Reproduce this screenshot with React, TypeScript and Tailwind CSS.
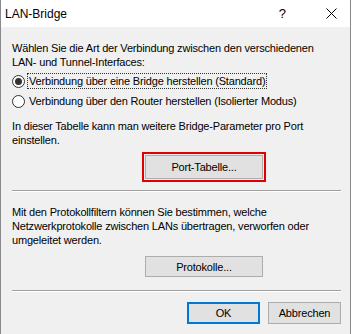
import React from 'react';

const font = { fontFamily: '"Liberation Sans", Arial, sans-serif' };

const Radio = ({ checked = false }: { checked?: boolean }) => (
  <span className="flex h-[13px] w-[13px] flex-shrink-0 items-center justify-center rounded-full border border-[#333333] bg-white">
    {checked && <span className="h-[7px] w-[7px] rounded-full bg-[#333333]" />}
  </span>
);

const Separator = () => <div className="h-[2px] border-t border-b border-t-[#a0a0a0] border-b-white" />;

export default function App() {
  return (
    <div className="relative h-[334px] w-[352px] overflow-hidden bg-white text-black" style={font}>
      <div className="flex h-full w-[351px] flex-col border-x border-x-[#8a8a8a]">
        {/* Title bar */}
        <div className="flex h-[27px] flex-shrink-0 items-center bg-white pl-[4px] text-[12px]">
          <span className="flex-1">LAN-Bridge</span>
          <span className="mr-[40px] text-[13px]">?</span>
          <svg width="11" height="11" viewBox="0 0 11 11" className="mr-[13px]">
            <path d="M0.5 0.5l10 10M10.5 0.5l-10 10" stroke="#000" strokeWidth="1" />
          </svg>
        </div>

        {/* Body */}
        <div className="flex flex-1 flex-col bg-[#f0f0f0] pl-[11px] pr-[9px] pt-[14px] text-[11px] leading-[14px] tracking-[-0.18px]">
          <p>
            Wählen Sie die Art der Verbindung zwischen den verschiedenen
            <br />
            LAN- und Tunnel-Interfaces:
          </p>

          <div className="mt-[4px] flex h-[16px] items-center">
            <Radio checked />
            <span className="ml-[2px] border border-dotted border-[#333] px-[1px] leading-[14px]">
              Verbindung über eine Bridge herstellen (Standard)
            </span>
          </div>
          <div className="mt-[4px] flex h-[16px] items-center">
            <Radio />
            <span className="ml-[3px] px-[1px]">Verbindung über den Router herstellen (Isolierter Modus)</span>
          </div>

          <p className="mt-[10px]">
            In dieser Tabelle kann man weitere Bridge-Parameter pro Port
            <br />
            einstellen.
          </p>

          <div className="ml-[130px] mt-[5px] h-[30px] w-[124px] border-[2px] border-[#e00000] p-[1px]">
            <button className="flex h-full w-full items-center justify-center border border-[#adadad] bg-[#e1e1e1]">
              Port-Tabelle...
            </button>
          </div>

          <div className="mt-[8px]">
            <Separator />
          </div>

          <p className="mt-[13px]">
            Mit den Protokollfiltern können Sie bestimmen, welche
            <br />
            Netzwerkprotokolle zwischen LANs übertragen, verworfen oder
            <br />
            umgeleitet werden.
          </p>

          <button className="ml-[133px] mt-[9px] flex h-[21px] w-[118px] items-center justify-center border border-[#adadad] bg-[#e1e1e1]">
            Protokolle...
          </button>

          <div className="mt-[13px]">
            <Separator />
          </div>

          <div className="mt-[10px] flex justify-end gap-[8px]">
            <button className="flex h-[22px] w-[73px] items-center justify-center border-2 border-[#0078d7] bg-[#e1e1e1]">
              OK
            </button>
            <button className="flex h-[22px] w-[73px] items-center justify-center border border-[#adadad] bg-[#e1e1e1]">
              Abbrechen
            </button>
          </div>
        </div>
      </div>
    </div>
  );
}
